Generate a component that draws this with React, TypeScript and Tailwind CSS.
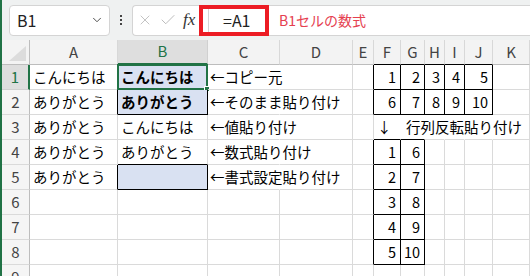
import { Check, ChevronDown, X } from "lucide-react";

const COLS = ["A", "B", "C", "D", "E", "F", "G", "H", "I", "J", "K"];
const FONT = { fontFamily: '"Noto Sans CJK JP", "Noto Sans", sans-serif' };

type Cell = { text?: string; bold?: boolean; fill?: boolean; right?: boolean };

// sheet content, keyed "B2" etc.
const DATA: Record<string, Cell> = {
  A1: { text: "こんにちは" },
  A2: { text: "ありがとう" },
  A3: { text: "ありがとう" },
  A4: { text: "ありがとう" },
  A5: { text: "ありがとう" },
  B1: { text: "こんにちは", bold: true, fill: true },
  B2: { text: "ありがとう", bold: true, fill: true },
  B3: { text: "こんにちは" },
  B4: { text: "ありがとう" },
  B5: { fill: true },
  C1: { text: "←コピー元" },
  C2: { text: "←そのまま貼り付け" },
  C3: { text: "←値貼り付け" },
  C4: { text: "←数式貼り付け" },
  C5: { text: "←書式設定貼り付け" },
  F3: { text: "↓　行列反転貼り付け" },
};
for (let i = 0; i < 5; i++) {
  DATA[`${COLS[5 + i]}1`] = { text: String(i + 1), right: true };
  DATA[`${COLS[5 + i]}2`] = { text: String(i + 6), right: true };
  DATA[`F${i + 4}`] = { text: String(i + 1), right: true };
  DATA[`G${i + 4}`] = { text: String(i + 6), right: true };
}

// cells with black borders
function boxed(r: number, c: number) {
  if (c === 1 && (r === 2 || r === 5)) return true;
  if (r >= 1 && r <= 2 && c >= 5 && c <= 9) return true;
  if (r >= 4 && r <= 8 && c >= 5 && c <= 6) return true;
  return false;
}

// gridlines hidden where text runs over into the next cell
function overflowRight(r: number, c: number) {
  if (r >= 1 && r <= 5 && c === 2) return true;
  if (r === 3 && c >= 5 && c <= 9) return true;
  return false;
}

function SheetCell({ r, c }: { r: number; c: number }) {
  const key = `${COLS[c]}${r}`;
  const cell = DATA[key] ?? {};
  const rightBlack = boxed(r, c) || boxed(r, c + 1);
  const bottomBlack = boxed(r, c) || boxed(r + 1, c);
  const rb = rightBlack ? "border-r-black" : overflowRight(r, c) ? "border-r-transparent" : "border-r-[#dadada]";
  const bb = bottomBlack ? "border-b-black" : "border-b-[#dadada]";
  return (
    <div
      className={`relative flex h-[25px] items-center whitespace-nowrap border-b border-r text-[14.5px] text-black ${rb} ${bb} ${
        cell.fill ? "bg-[#d9e1f2]" : ""
      } ${cell.right ? "justify-end pr-[4px]" : c === 2 ? "pl-[2px]" : "pl-[3px]"} ${cell.bold ? "font-bold" : ""}`}
    >
      <span className="leading-none">{cell.text}</span>
      {key === "B1" && (
        <div className="pointer-events-none absolute -left-px -top-px bottom-[-1px] right-[-1px] border-2 border-[#217346]">
          <div className="absolute -bottom-[4px] -right-[4px] h-[6px] w-[6px] border border-white bg-[#217346]" />
        </div>
      )}
    </div>
  );
}

export default function App() {
  const rows = [1, 2, 3, 4, 5, 6, 7, 8, 9];
  return (
    <div className="h-[276px] w-[530px] overflow-hidden border-l-2 border-[#217346] bg-white" style={FONT}>
      {/* formula bar */}
      <div className="relative flex h-[40px] items-center bg-[#eff1f1] pl-[7px]">
        <div className="flex h-[31px] w-[101px] items-center justify-between rounded-[4px] border border-[#d4d4d4] bg-white pl-[7px] pr-[5px]">
          <span className="text-[16px] text-[#222]">B1</span>
          <ChevronDown size={14} strokeWidth={1.6} className="text-[#444]" />
        </div>
        <div className="flex w-[22px] flex-col items-center gap-[2px]">
          <span className="h-[2px] w-[2px] bg-[#444]" />
          <span className="h-[2px] w-[2px] bg-[#444]" />
          <span className="h-[2px] w-[2px] bg-[#444]" />
        </div>
        <div className="flex h-[31px] flex-1 items-center rounded-l-[4px] border border-r-0 border-[#d4d4d4] bg-white">
          <div className="flex w-[75px] items-center gap-[6px] pl-[4px]">
            <X size={16} strokeWidth={1.2} className="text-[#b4b4b4]" />
            <Check size={18} strokeWidth={1.2} className="text-[#b4b4b4]" />
            <span className="text-[17px] italic text-[#333]" style={{ fontFamily: '"Liberation Serif", serif' }}>
              fx
            </span>
          </div>
          <div className="flex h-full flex-1 items-center border-l border-[#d4d4d4] pl-[14px]">
            <span className="w-[56px] text-[16px] text-[#222]">=A1</span>
            <span className="text-[14px] text-[#e5404f]">B1セルの数式</span>
          </div>
        </div>
        {/* red annotation box */}
        <div className="pointer-events-none absolute left-[197px] top-[5px] h-[31px] w-[70px] border-4 border-[#ec1c24]" />
      </div>

      {/* sheet */}
      <div className="grid grid-cols-[28px_88px_90px_72px_73px_21px_27px_24px_20px_20px_28px_1fr]">
        <div className="flex h-[25px] items-end justify-end border-b border-r border-[#bdbdbd] bg-[#f3f3f3] pb-[3px] pr-[3px]">
          <svg width="17" height="15" viewBox="0 0 17 15">
            <polygon points="17,0 17,15 0,15" fill="#dcdcdc" />
          </svg>
        </div>
        {COLS.map((col, c) =>
          c === 1 ? (
            <div
              key={col}
              className="flex h-[25px] items-center justify-center border-b-2 border-r border-b-[#217346] border-r-[#d0d0d0] bg-[#dedede] text-[15px] text-[#217346]"
            >
              {col}
            </div>
          ) : (
            <div
              key={col}
              className={`flex h-[25px] items-center justify-center border-b border-r border-r-[#d8d8d8] bg-[#f3f3f3] text-[15px] text-[#444] ${
                c >= 5 && c <= 9 ? "border-b-black" : "border-b-[#bdbdbd]"
              }`}
            >
              {col}
            </div>
          )
        )}
        {rows.map((r) => [
          <div
            key={`h${r}`}
            className={`flex h-[25px] items-center justify-center border-b text-[15px] ${
              r === 1
                ? "border-r-2 border-b-[#d0d0d0] border-r-[#217346] bg-[#dedede] text-[#217346]"
                : "border-r border-b-[#dadada] border-r-[#bdbdbd] bg-[#f5f5f5] text-[#444]"
            }`}
          >
            {r}
          </div>,
          ...COLS.map((_, c) => <SheetCell key={`${r}-${c}`} r={r} c={c} />),
        ])}
      </div>
    </div>
  );
}
